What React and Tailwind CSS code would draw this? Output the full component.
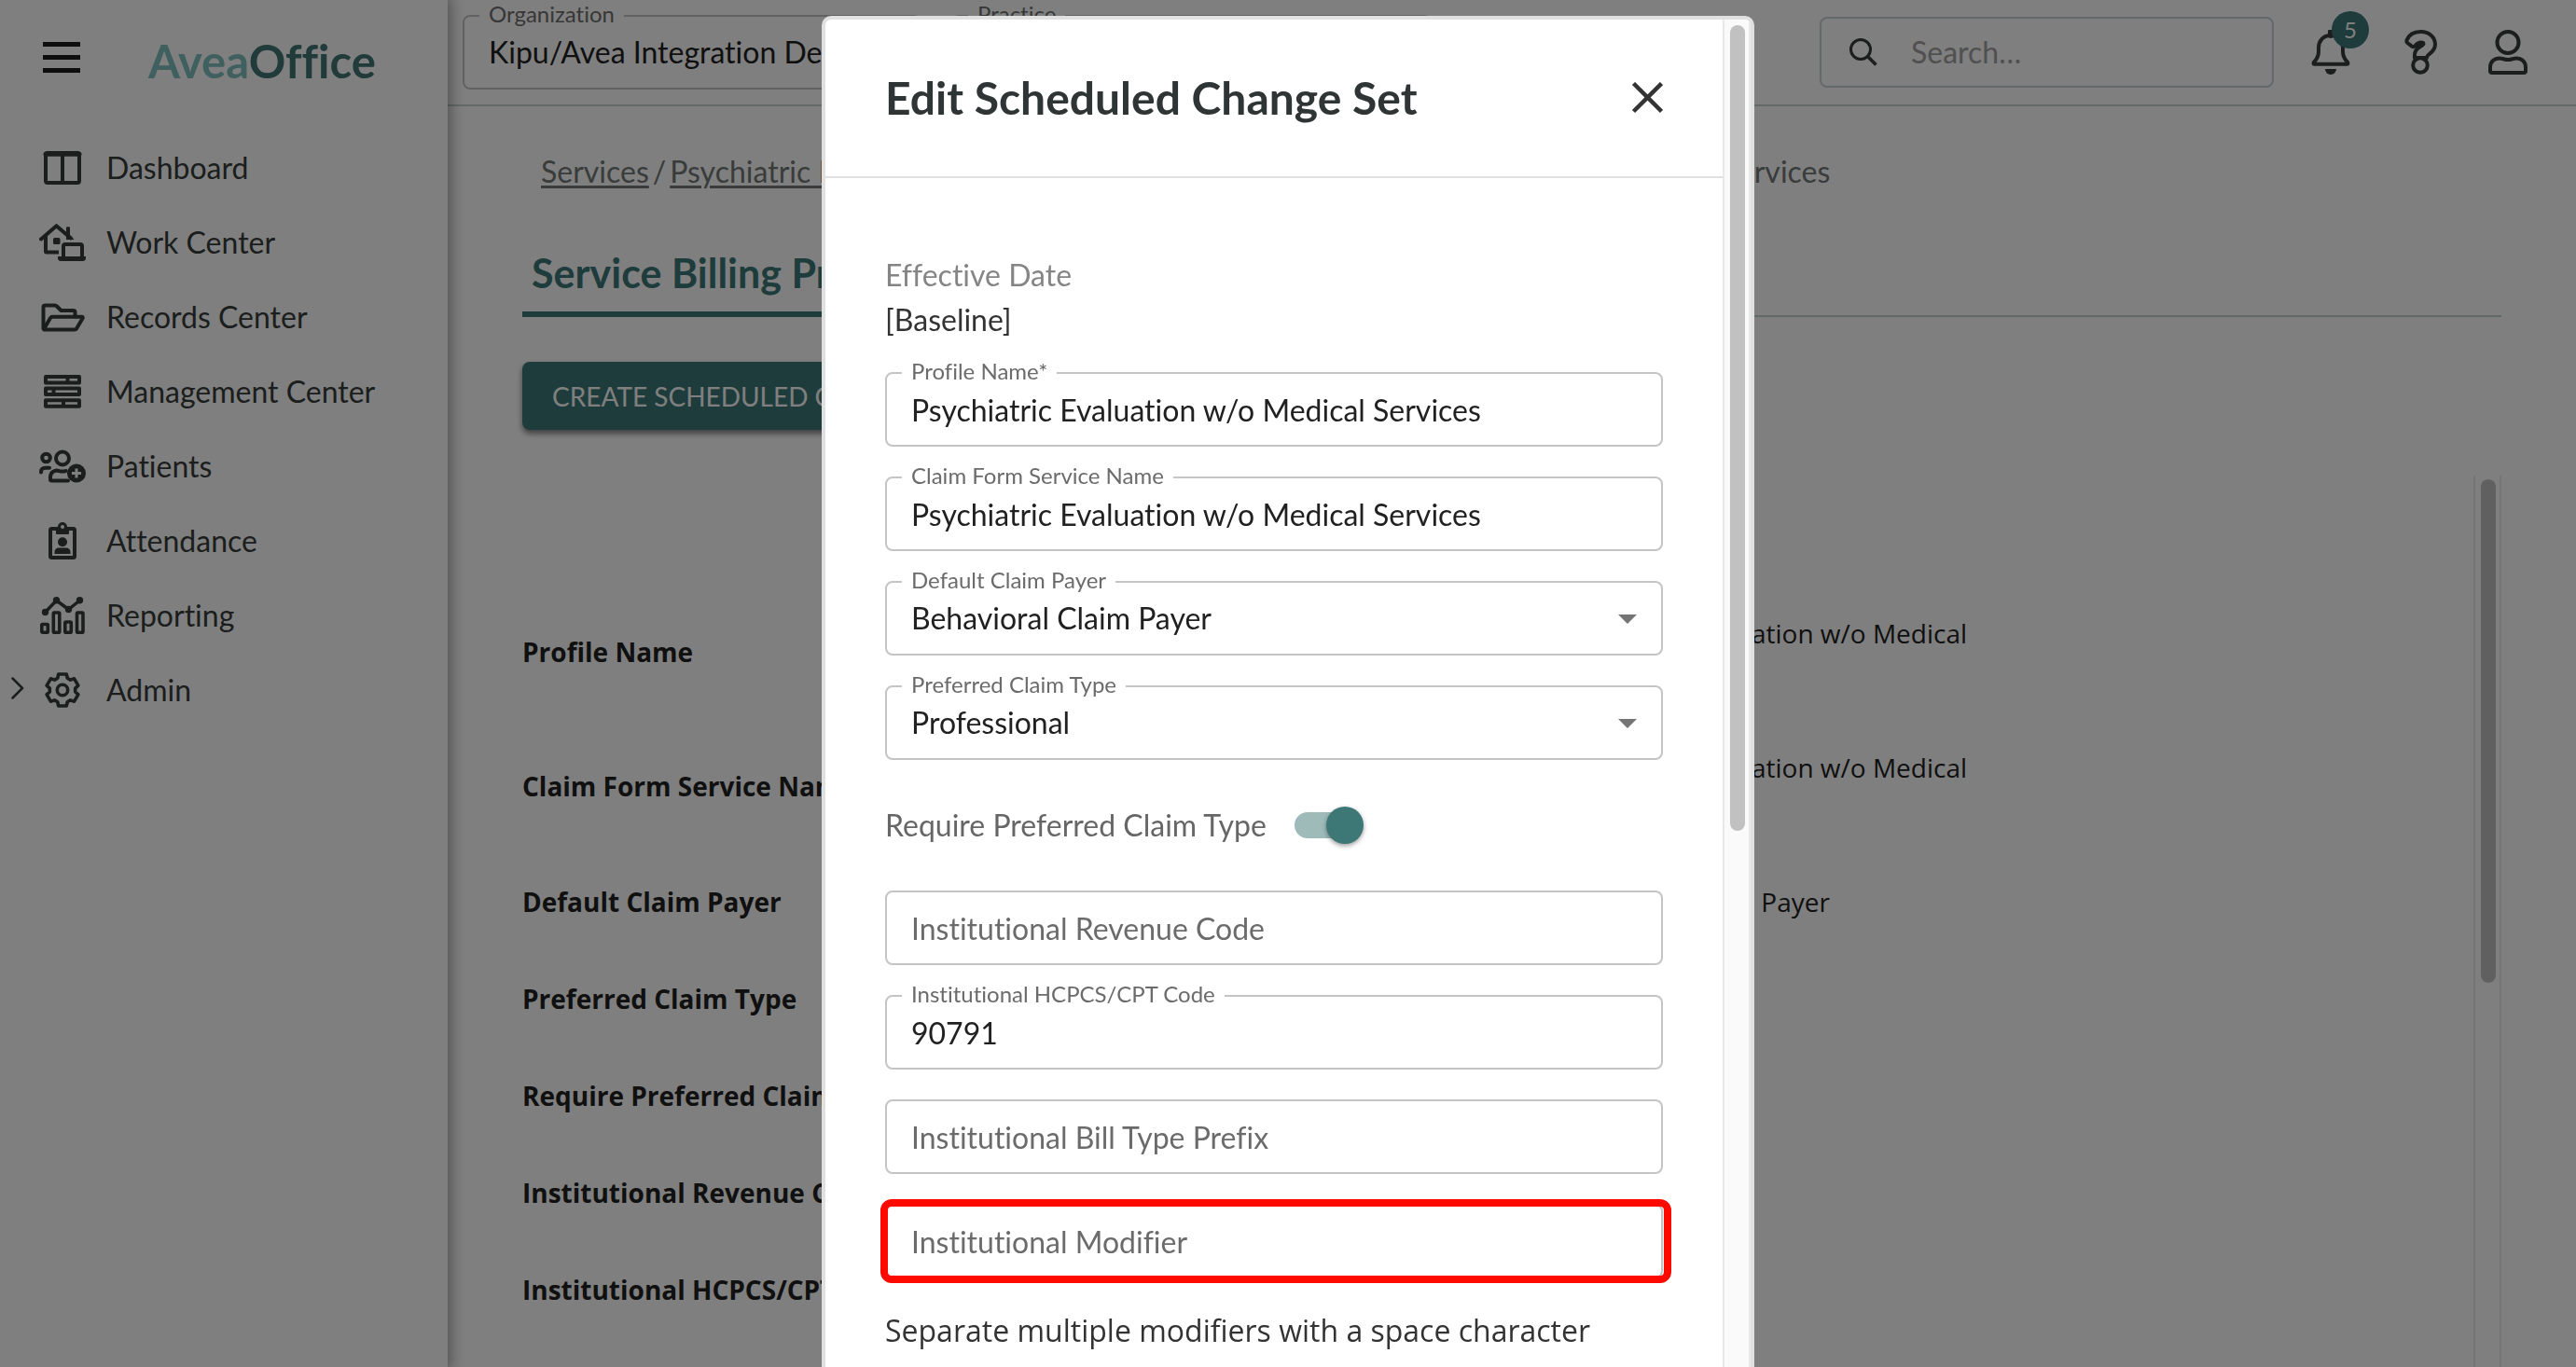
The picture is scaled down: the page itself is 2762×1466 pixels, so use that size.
import React from "react";

const ink = "#363c3b";

const gear = (() => {
  const pts = [];
  for (let i = 0; i < 6; i++) {
    const a = (i * Math.PI) / 3;
    for (const [x, y] of [[-5.2, -12.8], [-4.3, -17], [4.3, -17], [5.2, -12.8]]) {
      pts.push(
        `${(25 + x * Math.cos(a) - y * Math.sin(a)).toFixed(2)} ${(22 + x * Math.sin(a) + y * Math.cos(a)).toFixed(2)}`
      );
    }
  }
  return `M${pts.join("L")}Z`;
})();

function NavSvg({ children }) {
  return (
    <svg
      viewBox="0 0 50 44"
      className="h-11 w-[50px] shrink-0"
      fill="none"
      stroke={ink}
      strokeWidth="4"
      strokeLinecap="round"
      strokeLinejoin="round"
      aria-hidden="true"
    >
      {children}
    </svg>
  );
}

const navItems = [
  {
    label: "Dashboard",
    icon: (
      <>
        <rect x="7" y="6" width="36" height="32" rx="2" />
        <path d="M7 7.2h36" strokeWidth="5" />
        <path d="M25 8v30" strokeLinecap="butt" />
      </>
    ),
  },
  {
    label: "Work Center",
    icon: (
      <>
        <path d="M2 18.5L18.5 4.200L34 17.500" />
        <path d="M29 6.200a1 1 0 0 1 1-1h2a1 1 0 0 1 1 1v8l4.500 4.800h-8.500z" fill={ink} stroke="none" />
        <path d="M7 15v16.500q0 1 1 1h13" strokeLinecap="butt" />
        <rect x="15" y="17" width="7.500" height="7" rx="1.500" fill={ink} stroke="none" />
        <path d="M26 37V26q0-2 2-2h16q2 0 2 2v11" strokeLinecap="butt" />
        <path d="M20 37h30v1.500q0 3.500-3.500 3.500h-23q-3.500 0-3.500-3.500z" fill={ink} stroke="none" />
      </>
    ),
  },
  {
    label: "Records Center",
    icon: (
      <>
        <path d="M4.500 34.500V11.500q0-2 2-2h10.500q1 0 2 1l4 4q.6.6 1.500.6h12q2 0 2 2v4.500" />
        <path d="M5 35l7-12q.8-1.200 2-1.200h31.500q2 0 1 1.700l-6.500 11q-.6 1-2 1H5.500z" />
      </>
    ),
  },
  {
    label: "Management Center",
    icon: (
      <>
        <rect x="7" y="6" width="36" height="6.500" />
        <rect x="7" y="18.500" width="36" height="6.500" />
        <rect x="7" y="31.200" width="36" height="6.500" />
        <path d="M30.500 6v6M15.500 19v6M26 31v6" strokeLinecap="butt" />
      </>
    ),
  },
  {
    label: "Patients",
    icon: (
      <>
        <circle cx="7.500" cy="13" r="4.300" />
        <circle cx="25" cy="13.500" r="7" />
        <path d="M2 28.500v-.5q0-4 5-4.200h4" />
        <path d="M31 37.500H13.500q-1.500 0-1.500-1.500v-2q0-6.500 6.500-7.500 1.500 0 3 .6 3.500 1 7 0" />
        <circle cx="40" cy="29.500" r="10" fill={ink} stroke="none" />
        <path d="M40 24.500v10M35 29.500h10" stroke="#fff" strokeWidth="3" strokeLinecap="butt" />
      </>
    ),
  },
  {
    label: "Attendance",
    icon: (
      <>
        <rect x="12" y="9" width="26" height="31" rx="1.500" />
        <path d="M18 8h14v6q0 1-1 1H19q-1 0-1-1z" fill={ink} stroke="none" />
        <circle cx="25" cy="7" r="3.500" fill="#fff" strokeWidth="3" />
        <circle cx="25" cy="23.300" r="5" fill={ink} stroke="none" />
        <path d="M16.500 36v-1.500q0-5 5-5h7q5 0 5 5V36z" fill={ink} stroke="none" />
      </>
    ),
  },
  {
    label: "Reporting",
    icon: (
      <>
        <path d="M6.500 18.500L18.500 6L31.500 15.500L43.500 6" strokeWidth="3.500" />
        <g fill={ink} stroke="none">
          <circle cx="6.500" cy="18.500" r="3.700" />
          <circle cx="18.500" cy="5.800" r="3.700" />
          <circle cx="31.500" cy="15.500" r="3.700" />
          <circle cx="43.500" cy="5.800" r="3.700" />
        </g>
        <g strokeWidth="3.600">
          <rect x="2.800" y="31.500" width="6.500" height="8.700" rx="1" />
          <rect x="15.300" y="19" width="6.500" height="21.200" rx="1" />
          <rect x="27.800" y="29" width="6.500" height="11.200" rx="1" />
          <rect x="40.500" y="19" width="6.500" height="21.200" rx="1" />
        </g>
      </>
    ),
  },
  {
    label: "Admin",
    expandable: true,
    icon: (
      <>
        <path d={gear} strokeWidth="3.600" />
        <circle cx="25" cy="22" r="5.700" strokeWidth="3.600" />
      </>
    ),
  },
];

function Sidebar() {
  return (
    <aside className="relative z-10 flex w-[480px] shrink-0 flex-col bg-white shadow-[0_0_14px_4px_rgba(0,0,0,0.35)]">
      <div className="flex h-[140px] items-start gap-[73px] pl-[46px]">
        <button aria-label="Menu" className="mt-[45px] flex w-10 flex-col gap-[9px]">
          <span className="h-[5px] bg-[#1c1c1c]" />
          <span className="h-[5px] bg-[#1c1c1c]" />
          <span className="h-[5px] bg-[#1c1c1c]" />
        </button>
        <a href="#home" className="mt-[35px] text-[49px] font-bold leading-[60px] text-[#7fc0be]">
          Avea<span className="text-[#437574]">Office</span>
        </a>
      </div>
      <nav>
        {navItems.map((item) => (
          <a key={item.label} href="#nav" className="flex h-20 items-center text-[32px] text-[#363c3b]">
            <span className="flex w-[42px] pl-3 pb-1">
              {item.expandable && (
                <svg width="14" height="24" viewBox="0 0 14 24" fill="none" stroke={ink} strokeWidth="2.500" strokeLinecap="round" strokeLinejoin="round" aria-hidden="true">
                  <path d="M1.500 1.500L12 12L1.500 22.500" />
                </svg>
              )}
            </span>
            <NavSvg>{item.icon}</NavSvg>
            <span className="ml-[22px]">{item.label}</span>
          </a>
        ))}
      </nav>
    </aside>
  );
}

function HeaderSelect({ id, label, value, width }) {
  return (
    <div className={`relative ${width}`}>
      <label htmlFor={id} className="absolute -top-[13px] left-[18px] bg-white px-2.5 text-2xl leading-6 text-[#6f6f6f]">
        {label}
      </label>
      <select id={id} className="h-20 w-full appearance-none rounded-lg border-2 border-[#c4c4c4] pl-[26px] text-[32px] text-[#212121]">
        <option>{value}</option>
      </select>
    </div>
  );
}

function TopBar() {
  return (
    <header className="flex h-[114px] shrink-0 items-start border-b-2 border-[#c5d5d3] pl-4">
      <div className="flex gap-8 pt-4">
        <HeaderSelect id="org" label="Organization" value="Kipu/Avea Integration Demo" width="w-[492px]" />
        <HeaderSelect id="practice" label="Practice" value="All Practices" width="w-[515px]" />
      </div>
      <label className="ml-auto mt-[18px] flex h-[76px] w-[487px] items-center gap-9 rounded-lg border-2 border-[#c9d2d8] pl-[30px]">
        <svg width="30" height="30" viewBox="0 0 30 30" fill="none" stroke={ink} strokeWidth="3" aria-hidden="true">
          <circle cx="12" cy="12" r="10.500" />
          <path d="M19.500 19.500L28.500 28.500" strokeWidth="3.500" />
        </svg>
        <input aria-label="Search" placeholder="Search…" className="min-w-0 flex-1 text-[32px] outline-none placeholder:text-[#a0a0a0]" />
      </label>
      <div className="mr-[52px] flex gap-[54px] pl-10 pt-8">
        <button aria-label="Notifications, 5 new" className="relative">
          <svg width="42" height="48" viewBox="0 0 42 48" fill="none" stroke={ink} strokeWidth="4" strokeLinejoin="round" aria-hidden="true">
            <path d="M21 6c-8 0-13 6-13 13v4c0 5-2 8.500-4.500 11-1.500 1.500-1 2.800 0 2.800h35c1 0 1.500-1.300 0-2.800C36 31.500 34 28 34 23v-4c0-7-5-13-13-13z" />
            <path d="M21 6V2" strokeWidth="6" strokeLinecap="round" />
            <path d="M15 42h12a6 6 0 0 1-12 0z" fill={ink} stroke="none" />
          </svg>
          <span className="absolute -top-5 left-[22px] flex size-10 items-center justify-center rounded-full bg-[#3d7877] text-2xl text-white">
            5
          </span>
        </button>
        <button aria-label="Help" className="pl-1">
          <svg width="36" height="48" viewBox="0 0 36 48" fill="none" stroke={ink} strokeWidth="4" strokeLinejoin="round" strokeLinecap="round" aria-hidden="true">
            <path d="M2.600 11C5 5 10 2 17.500 2C26 2 33 7.500 33 15.500C33 22 28 25 26 26.500C24.500 27.600 24 28.500 24 30H11V27C11 21.500 14.500 19.500 17 18C19.500 16.500 20.500 16 20.500 15C20.500 13.800 19 13.600 17.500 13.600C14.500 13.600 13.500 15 11.500 17.200C10 18.800 9 18.300 8 17.600L3.300 14Q2 12.800 2.600 11Z" />
            <path d="M14 18L18 15.500" strokeWidth="5" />
            <circle cx="17" cy="38" r="7.800" />
          </svg>
        </button>
        <button aria-label="Account">
          <svg width="42" height="48" viewBox="0 0 42 48" fill="none" stroke={ink} strokeWidth="4" strokeLinejoin="round" aria-hidden="true">
            <circle cx="21" cy="13.500" r="11.500" />
            <path d="M2 44v-4c0-6 4.500-9.500 10-9.500 3.500 0 5 1.500 9 1.500s5.500-1.500 9-1.500c5.500 0 10 3.500 10 9.500v4q0 2-2 2H4q-2 0-2-2z" />
          </svg>
        </button>
      </div>
    </header>
  );
}

const service = "Psychiatric Evaluation w/o Medical Services";
const rows = [
  ["Profile Name", service, "h-36"],
  ["Claim Form Service Name", service, "h-36"],
  ["Default Claim Payer", "Behavioral Claim Payer", "h-[104px]"],
  ["Preferred Claim Type", "", "h-[104px]"],
  ["Require Preferred Claim Type", "", "h-[104px]"],
  ["Institutional Revenue Code", "", "h-[104px]"],
  ["Institutional HCPCS/CPT Code", "", "h-[104px]"],
];

function ProfilePage() {
  return (
    <main className="flex min-h-0 flex-1 flex-col pl-20 pr-20">
      <nav className="mt-[46px] flex gap-1 whitespace-nowrap pl-5 text-[32px] leading-[48px] text-[#727876]">
        <a href="#services" className="underline decoration-3 underline-offset-3">Services</a>
        <span>/</span>
        <a href="#service" className="underline decoration-3 underline-offset-3">{service}</a>
        <span>/</span>
        <span>{service}</span>
      </nav>
      <div className="mt-10 flex h-[92px] border-b-2 border-[#c5d5d3]">
        <button className="-mb-0.5 border-b-[6px] border-[#3d7877] px-2.5 pt-1 text-[43px] font-bold text-[#3d7877]">
          Service Billing Profiles
        </button>
      </div>
      <button className="mt-12 h-[73px] self-start rounded-lg bg-[#3d7877] px-8 text-[28px] text-white shadow-[0_4px_6px_rgba(0,0,0,0.5)]">
        CREATE SCHEDULED CHANGE SET
      </button>
      <div className="mt-[49px] flex min-h-0 flex-1">
        <div className="min-w-0 flex-1 overflow-hidden pt-[117px] font-['Open_Sans',sans-serif] text-[28px] leading-10 text-[#212121]">
          <table className="w-full table-fixed">
            <tbody>
              {rows.map(([name, value, height]) => (
                <tr key={name} className={height}>
                  <th scope="row" className="w-[1102px] p-0 text-left font-bold">{name}</th>
                  <td className="p-0">
                    <div className="w-[500px]">{value}</div>
                  </td>
                </tr>
              ))}
            </tbody>
          </table>
        </div>
        <div className="w-[30px] border-x-2 border-[#eaeaea] pl-1.5 pt-1">
          <div className="h-[540px] w-4 rounded-full bg-[#c1c1c1]" />
        </div>
      </div>
    </main>
  );
}

const fieldBox =
  "block h-20 w-full appearance-none rounded-lg border-2 border-[#c4c4c4] bg-white px-[26px] text-[32px] text-[#212121] outline-none placeholder:text-[#6b6b6b]";

function FloatingLabel({ id, children }) {
  return (
    <label htmlFor={id} className="absolute -top-[13px] left-[18px] bg-white px-2.5 text-2xl leading-6 text-[#6b6b6b]">
      {children}
    </label>
  );
}

function TextField({ id, label, value }) {
  return (
    <div className="relative">
      <input id={id} defaultValue={value} className={fieldBox} />
      <FloatingLabel id={id}>{label}</FloatingLabel>
    </div>
  );
}

function EmptyField({ label, marked }) {
  return (
    <div className="relative">
      <input aria-label={label} placeholder={label} className={fieldBox} />
      {marked && (
        <span className="pointer-events-none absolute -bottom-[5px] -left-[5px] -right-[9px] -top-[5px] rounded-xl border-8 border-[#ff0a00]" />
      )}
    </div>
  );
}

function SelectField({ id, label, value }) {
  return (
    <div className="relative">
      <select id={id} className={fieldBox}>
        <option>{value}</option>
      </select>
      <svg width="20" height="10" viewBox="0 0 20 10" className="pointer-events-none absolute right-7 top-9 fill-[#757575]" aria-hidden="true">
        <path d="M0 0h20L10 10z" />
      </svg>
      <FloatingLabel id={id}>{label}</FloatingLabel>
    </div>
  );
}

function EditDialog() {
  return (
    <section
      role="dialog"
      aria-modal="true"
      aria-labelledby="dialog-title"
      className="flex h-full w-[1000px] max-w-full overflow-hidden rounded-t-[10px] border-4 border-b-0 border-[#e0e0e0] bg-white"
    >
      <div className="min-w-0 flex-1">
        <header className="flex h-[170px] items-center justify-between border-b-2 border-[#e0e0e0] px-16">
          <h2 id="dialog-title" className="text-5xl font-bold text-[#2f3434]">
            Edit Scheduled Change Set
          </h2>
          <button aria-label="Close">
            <svg width="34" height="34" viewBox="0 0 34 34" fill="none" stroke="#333" strokeWidth="4.500" aria-hidden="true">
              <path d="M2.500 1.500L32.500 31.500M32.500 1.500L2.500 31.500" />
            </svg>
          </button>
        </header>
        <form className="px-16 pt-20 text-[32px]">
          <div className="leading-[48px]">
            <p className="text-[#858585]">Effective Date</p>
            <p className="text-[#333]">[Baseline]</p>
          </div>
          <div className="mt-8 flex flex-col gap-8">
            <TextField id="profile-name" label="Profile Name*" value={service} />
            <TextField id="claim-name" label="Claim Form Service Name" value={service} />
            <SelectField id="payer" label="Default Claim Payer" value="Behavioral Claim Payer" />
            <SelectField id="claim-type" label="Preferred Claim Type" value="Professional" />
          </div>
          <div className="flex h-[140px] items-center gap-[30px]">
            <label htmlFor="require-type" className="text-[#666]">Require Preferred Claim Type</label>
            <input
              id="require-type"
              type="checkbox"
              role="switch"
              defaultChecked
              className="relative h-7 w-[68px] appearance-none rounded-full bg-[#9ebbba] before:absolute before:-top-1.5 before:left-[34px] before:size-10 before:rounded-full before:bg-[#3d7877] before:shadow-[0_2px_5px_rgba(0,0,0,0.4)]"
            />
          </div>
          <div className="flex flex-col gap-8">
            <EmptyField label="Institutional Revenue Code" />
            <TextField id="hcpcs" label="Institutional HCPCS/CPT Code" value="90791" />
            <EmptyField label="Institutional Bill Type Prefix" />
            <EmptyField label="Institutional Modifier" marked />
          </div>
          <p className="mt-8 font-['Open_Sans',sans-serif] leading-[48px] text-[#333]">
            Separate multiple modifiers with a space character
          </p>
        </form>
      </div>
      <div className="w-[30px] shrink-0 border-x-2 border-[#e8e8e8] bg-[#fafafa] pl-1.5 pt-1.5">
        <div className="h-[864px] w-4 rounded-full bg-[#c1c1c1]" />
      </div>
    </section>
  );
}

export default function App() {
  return (
    <div className="relative flex h-screen overflow-hidden bg-white font-[Lato,sans-serif] [font-variant-ligatures:no-common-ligatures]">
      <Sidebar />
      <div className="flex min-w-0 flex-1 flex-col">
        <TopBar />
        <ProfilePage />
      </div>
      <div className="fixed inset-0 z-20 flex justify-center bg-black/50 pt-[17px]">
        <EditDialog />
      </div>
    </div>
  );
}
